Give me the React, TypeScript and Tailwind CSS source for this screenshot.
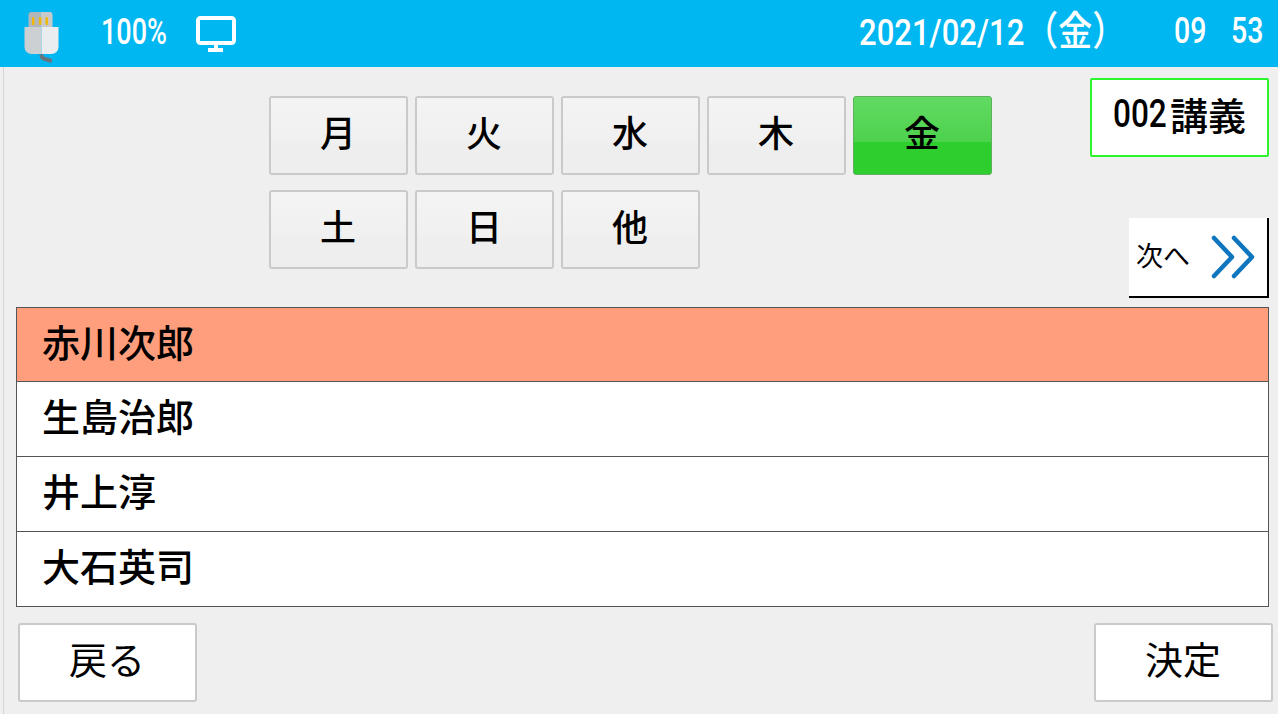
const cjk = "font-['Noto_Sans_CJK_JP','Noto_Sans',sans-serif]";

function Day({ label, active }: { label: string; active?: boolean }) {
  return (
    <div
      className={
        active
          ? "relative flex h-[79px] w-[139px] items-center justify-center overflow-hidden rounded-[3px] border border-[#5fb05f] bg-[#2fce2f] pb-[9px] pr-[1px]"
          : "relative flex h-[79px] w-[139px] items-center justify-center overflow-hidden rounded-[3px] border-2 border-[#cacaca] bg-[#eeeeee] pb-[9px] pr-[1px]"
      }
    >
      <div
        className={
          active
            ? "absolute inset-x-0 top-0 h-[45px] bg-gradient-to-b from-[#62da62] to-[#4dd24d]"
            : "absolute inset-x-0 top-0 h-[45px] bg-gradient-to-b from-[#f4f4f4] to-[#f0f0f0]"
        }
      />
      <span className="relative text-[36px] font-medium leading-none text-black">{label}</span>
    </div>
  );
}

function Row({ label, active, height }: { label: string; active?: boolean; height: string }) {
  return (
    <div
      className={
        (active ? "bg-[#ff9e7c] " : "bg-white ") +
        height +
        " flex items-center border-b border-[#555555] pb-[8px] pl-[25px] last:border-b-0"
      }
    >
      <span className="text-[38px] font-medium leading-none text-black">{label}</span>
    </div>
  );
}

export default function App() {
  return (
    <div className={`h-[714px] w-[1278px] overflow-hidden bg-[#efefef] ${cjk}`}>
      <header className="flex h-[67px] items-center bg-[#00b7f1] text-white">
        <svg width="40" height="62" viewBox="0 0 40 62" className="ml-[21px]">
          <path d="M7.5 12a3 3 0 0 1 3-3h9v15h-12z" fill="#b3b6b9" />
          <path d="M19.5 9h9a3 3 0 0 1 3 3v12h-12z" fill="#c7c9cb" />
          <rect x="11" y="14" width="2.4" height="8" rx="1" fill="#f2b705" />
          <rect x="18" y="14" width="2.4" height="8" rx="1" fill="#f2b705" />
          <rect x="24.5" y="14" width="2.4" height="8" rx="1" fill="#f2b705" />
          <path d="M3.5 24h17v27h-10a7 7 0 0 1-7-7z" fill="#ccd0d3" />
          <path d="M20.5 24h17v20a7 7 0 0 1-7 7h-10z" fill="#e9edf0" />
          <path d="M20 51.500c1 4 3 5 6 5l3 1v2" fill="none" stroke="#66757f" strokeWidth="4" />
        </svg>
        <span className="mb-[4px] ml-[40px] inline-block w-[65px] origin-left scale-x-[0.73] whitespace-nowrap font-['Roboto',sans-serif] text-[37px] font-medium leading-none">
          100%
        </span>
        <svg width="42" height="38" viewBox="0 0 42 38" className="ml-[29px]">
          <rect x="3" y="3" width="36" height="25" rx="2.500" fill="none" stroke="#fff" strokeWidth="4" />
          <rect x="19" y="28" width="4" height="6" fill="#fff" />
          <rect x="13" y="33" width="15" height="4" fill="#fff" />
        </svg>
        <div className="mb-[4px] ml-auto flex items-center pr-[13px]">
          <span className="inline-block w-[315px] origin-left scale-x-[0.85] whitespace-nowrap font-['Roboto','Noto_Sans_CJK_JP',sans-serif] text-[36.5px] font-medium leading-none">
            2021/02/12<span className="text-[40px]">（金）</span>
          </span>
          <span className="w-[34px] origin-left scale-x-[0.78] font-['Roboto',sans-serif] text-[36.5px] font-medium leading-none">09</span>
          <span className="ml-[23px] w-[34px] origin-left scale-x-[0.78] font-['Roboto',sans-serif] text-[36.5px] font-medium leading-none">53</span>
        </div>
      </header>

      <div className="ml-[3px] h-[647px] border-l border-[#d6d6d6]">
        <div className="flex h-[240px] pl-[265px] pr-[9px]">
          <div className="flex w-[723px] flex-wrap content-start gap-x-[7px] gap-y-[15px] pt-[29px]">
            <Day label="月" />
            <Day label="火" />
            <Day label="水" />
            <Day label="木" />
            <Day label="金" active />
            <Day label="土" />
            <Day label="日" />
            <Day label="他" />
          </div>
          <div className="ml-auto flex w-[179px] flex-col items-end pt-[11px]">
            <div className="flex h-[79px] w-[179px] items-center justify-center rounded-[2px] border-2 border-[#2bf52b] bg-white pb-[7px]">
              <span className="inline-block w-[57px] origin-left scale-x-[0.83] font-['Roboto',sans-serif] text-[38px] font-medium leading-none text-black">002</span>
              <span className="text-[38px] font-medium leading-none text-black">講義</span>
            </div>
            <div className="mt-[61px] flex h-[80px] w-[140px] items-center justify-between border-b-2 border-r-2 border-black bg-white pl-[7px] pr-[11px]">
              <span className="pb-[5px] text-[27px] leading-none text-black">次へ</span>
              <svg width="46" height="46" viewBox="0 0 46 46">
                <path d="M4 4 L22 23 L4 42 M24 4 L42 23 L24 42" fill="none" stroke="#0e75bf" strokeWidth="4.500" strokeLinecap="round" strokeLinejoin="round" />
              </svg>
            </div>
          </div>
        </div>

        <div className="ml-[12px] mr-[9px] border border-[#555555]">
          <Row label="赤川次郎" active height="h-[74px]" />
          <Row label="生島治郎" height="h-[75px]" />
          <Row label="井上淳" height="h-[75px]" />
          <Row label="大石英司" height="h-[74px]" />
        </div>

        <div className="mt-[16px] flex justify-between pl-[14px] pr-[5px]">
          <div className="flex h-[79px] w-[179px] items-center justify-center rounded-[3px] border-2 border-[#cacaca] bg-white pb-[9px] pr-[1px]">
            <span className="text-[38px] leading-none text-black">戻る</span>
          </div>
          <div className="flex h-[79px] w-[179px] items-center justify-center rounded-[3px] border-2 border-[#cacaca] bg-white pb-[9px] pr-[1px]">
            <span className="text-[38px] leading-none text-black">決定</span>
          </div>
        </div>
      </div>
    </div>
  );
}
